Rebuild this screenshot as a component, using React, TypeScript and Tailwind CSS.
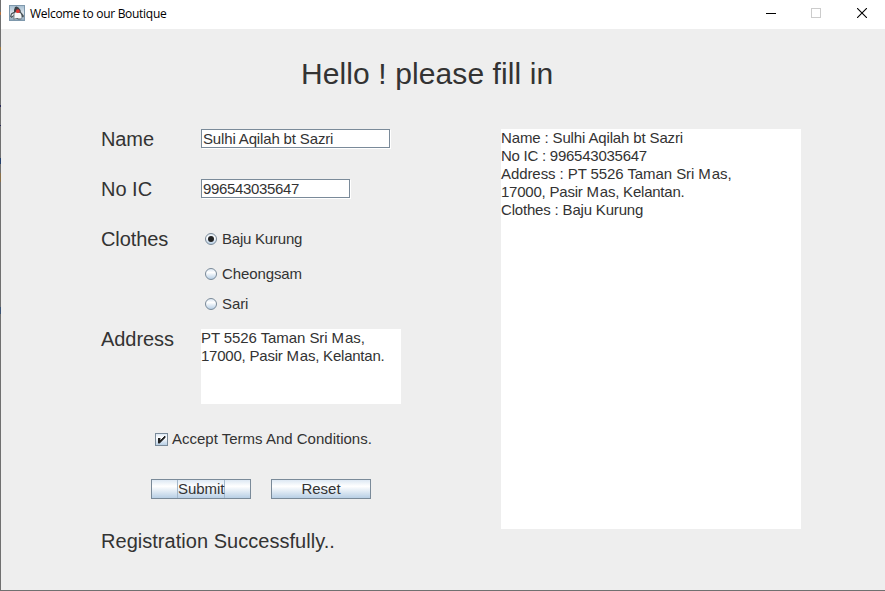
import type { ReactNode } from "react";

function JavaIcon() {
  return (
    <svg className="h-4 w-4 shrink-0" viewBox="0 0 16 16" aria-hidden="true">
      <defs>
        <linearGradient id="tile" x1="0" y1="0" x2="0" y2="1">
          <stop offset="0" stopColor="#a4bdd0" />
          <stop offset="0.5" stopColor="#dbe4eb" />
          <stop offset="1" stopColor="#8ba3b7" />
        </linearGradient>
      </defs>
      <rect x="0.5" y="0.5" width="15" height="15" fill="url(#tile)" stroke="#7e98ac" />
      <path d="M6 2 7.5 1.5 9.5 2.5 11.5 5 12 8.5 10.5 9 5 9 5 5Z" fill="#3b4247" />
      <path d="M4.6 7 2.2 8.3 1 11.5 2.6 13 4.8 11 4.6 14.5 7.5 13.8 9.5 14.5 12.4 14.2 12 11 14 12.8 15 11 12.5 7.5Z" fill="#4a5358" />
      <path d="M5.4 8 7 7.2 11.3 8 12.5 10.2 12 13.4 9.6 13.5 8.2 13 5.3 13.8Z" fill="#f7f8f8" />
      <path d="M3 9.2 4.8 8.2 4.6 10.3 2.3 11.5Z" fill="#e8ecee" />
      <circle cx="8.8" cy="6.2" r="1.9" fill="#e33a36" />
    </svg>
  );
}

function TitleBar() {
  return (
    <header className="flex h-[29px] items-center bg-white pb-[3px] pl-2">
      <JavaIcon />
      <h1 className="ml-[5px] pt-0.5 font-['Open_Sans',sans-serif] text-[12px] leading-4 tracking-[-0.29px] text-black">
        Welcome to our Boutique
      </h1>
      <div className="ml-auto flex items-center">
        <button aria-label="Minimize" className="flex h-[26px] w-[45px] items-center justify-center">
          <svg width="10" height="10" shapeRendering="crispEdges"><path d="M0 5h10v1H0z" fill="#000" /></svg>
        </button>
        <button aria-label="Maximize" disabled className="flex h-[26px] w-[46px] items-center justify-center">
          <span className="h-2.5 w-2.5 border border-[#ccc]" />
        </button>
        <button aria-label="Close" className="flex h-[26px] w-[46px] items-center justify-center">
          <svg width="10" height="10"><path d="M0 0 10 10M10 0 0 10" stroke="#000" strokeWidth="1.1" /></svg>
        </button>
      </div>
    </header>
  );
}

function Row({ label, tracking, children }: { label: string; tracking: string; children: ReactNode }) {
  return (
    <div className="flex items-start">
      <span className={`w-[100px] shrink-0 text-[20px] leading-5 ${tracking}`}>{label}</span>
      {children}
    </div>
  );
}

const fieldStyle =
  "h-[19px] border border-[#7a8a99] bg-white px-px text-[15px] leading-[17px] shadow-[1px_1px_0_#fff] outline-none";

function Radio({ label, tracking, checked = false }: { label: string; tracking: string; checked?: boolean }) {
  return (
    <label className="flex h-5 items-center pl-1">
      <span className="mr-[5px] flex h-3 w-3 items-center justify-center rounded-full border border-[#7a8a99] bg-linear-to-b from-[#dde8f3] via-white via-35% to-[#b8cfe5]">
        {checked && <span className="h-1.5 w-1.5 rounded-full bg-[#222]" />}
      </span>
      <span className={`text-[15px] leading-5 ${tracking}`}>{label}</span>
    </label>
  );
}

function SwingButton({ label, focused = false }: { label: string; focused?: boolean }) {
  return (
    <button className="flex h-5 w-[100px] justify-center border border-[#7a8a99] bg-linear-to-b from-[#dde8f3] via-white via-35% to-[#b8cfe5] text-[15px] leading-[18px]">
      <span className={focused ? "h-[18px] w-12 border-x border-[#a3b8cc] tracking-[-0.05px]" : ""}>{label}</span>
    </button>
  );
}

function Address({ prefix = "" }: { prefix?: string }) {
  return (
    <>
      <p className="tracking-[-0.08px]">{prefix}PT 5526 Taman Sri M<span className="ml-px">as,</span></p>
      <p className="tracking-[-0.22px]">17000, Pasir M<span className="ml-px">as, Kelantan.</span></p>
    </>
  );
}

export default function App() {
  return (
    <div className="flex h-[591px] w-[885px] border-b border-[#707070] bg-[#eee] font-['Liberation_Sans',Arial,sans-serif] text-[#333]">
      <div className="w-px shrink-0 bg-[linear-gradient(#707070_12px,#b07040_12px,#b07040_15px,#707070_15px,#707070_47px,#a07838_47px,#a07838_50px,#707070_50px,#707070_105px,#282858_105px,#282858_107px,#707070_107px,#707070_125px,#282858_125px,#282858_126px,#707070_126px,#707070_158px,#24406c_158px,#24406c_164px,#707070_164px,#707070_173px,#8a7048_173px,#8a7048_182px,#707070_182px,#707070_307px,#3c5474_307px,#3c5474_314px,#707070_314px)]" />
      <div className="flex flex-1 flex-col">
        <TitleBar />
        <main className="flex-1 pl-[100px]">
          <h2 className="pt-[27px] pl-[200px] text-[30px] leading-[36px] tracking-[0.1px]">Hello ! please fill in</h2>
          <div className="flex gap-[100px] pt-[37px]">
            <form className="w-[300px]" onSubmit={(e) => e.preventDefault()}>
              <div className="flex flex-col">
                <Row label="Name" tracking="tracking-[-0.1px]">
                  <input aria-label="Name" className={`w-[189px] tracking-[-0.15px] ${fieldStyle}`} defaultValue="Sulhi Aqilah bt Sazri" />
                </Row>
                <div className="mt-[30px]">
                  <Row label="No IC" tracking="tracking-normal">
                    <input aria-label="No IC" className={`w-[149px] tracking-[-0.34px] ${fieldStyle}`} defaultValue="996543035647" />
                  </Row>
                </div>
                <div className="mt-[30px]">
                  <Row label="Clothes" tracking="tracking-[-0.1px]">
                    <div>
                      <Radio label="Baju Kurung" tracking="tracking-[-0.22px]" checked />
                      <div className="mt-[15px]"><Radio label="Cheongsam" tracking="tracking-[-0.1px]" /></div>
                      <div className="mt-[10px]"><Radio label="Sari" tracking="tracking-[-0.1px]" /></div>
                    </div>
                  </Row>
                </div>
                <div className="mt-[15px]">
                  <Row label="Address" tracking="tracking-[-0.05px]">
                    <div className="h-[75px] w-[200px] shrink-0 bg-white text-[15px] leading-[18px] whitespace-nowrap"><Address /></div>
                  </Row>
                </div>
              </div>
              <label className="mt-[25px] flex h-5 items-center pl-[54px]">
                <span className="mr-1 flex h-[13px] w-[13px] items-center justify-center border border-[#7a8a99] bg-linear-to-b from-[#dde8f3] via-white via-35% to-[#b8cfe5]">
                  <svg width="9" height="9" shapeRendering="crispEdges"><path d="M1 3h2v2h1V4h1V3h1V2h1V1h1v2H7v1H6v1H5v1H4v1H3v1H1z" fill="#222" stroke="#222" strokeWidth="0.4" /></svg>
                </span>
                <span className="text-[15px] leading-5">Accept Terms And Conditions.</span>
              </label>
              <div className="mt-[30px] flex gap-5 pl-[50px]">
                <SwingButton label="Submit" focused />
                <SwingButton label="Reset" />
              </div>
              <p className="mt-8 text-[20px] leading-5 tracking-[0.03px]">Registration Successfully..</p>
            </form>
            <section aria-label="Registration details" className="h-[400px] w-[300px] bg-white text-[15px] leading-[18px] whitespace-nowrap">
              <p className="tracking-[-0.14px]">Name : Sulhi Aqilah bt Sazri</p>
              <p className="tracking-[-0.25px]">No IC : 996543035647</p>
              <Address prefix="Address : " />
              <p className="tracking-[-0.18px]">Clothes : Baju Kurung</p>
            </section>
          </div>
        </main>
      </div>
    </div>
  );
}
